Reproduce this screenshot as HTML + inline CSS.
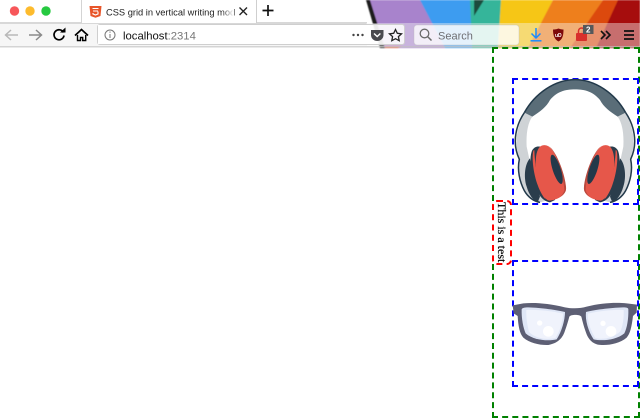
<!DOCTYPE html>
<html><head><meta charset="utf-8"><style>
html,body{margin:0;padding:0;background:#fff;width:640px;height:417px;overflow:hidden}
#s{position:absolute;left:0;top:0}
text{font-family:"Liberation Sans",sans-serif}
#g{position:absolute;left:492px;top:47px;width:144px;height:367px;border:2px dashed #008000}
.b{position:absolute;border:2px dashed #00f;box-sizing:border-box}
#r{position:absolute;left:492px;top:200px;width:20px;height:65px;border:2px dashed #f00;border-radius:5px;box-sizing:border-box;writing-mode:vertical-rl;font:12px/16px "Liberation Serif",serif;color:#000;white-space:nowrap;text-align:left;background:#fff;-webkit-text-stroke:.2px #000;overflow:visible}
</style></head><body>
<svg id="s" width="640" height="417" viewBox="0 0 640 417">
<defs>
<filter id="bl" x="-5%" y="-5%" width="110%" height="110%"><feGaussianBlur stdDeviation="0.6"/></filter>
<linearGradient id="fd" x1="0" x2="1" y1="0" y2="0"><stop offset="0" stop-color="#fff" stop-opacity="0"/><stop offset="1" stop-color="#fff"/></linearGradient>
</defs>
<!-- art -->
<g filter="url(#bl)">
<polygon points="367,0 422,0 446,48 384,48" fill="#a883cc"/>
<polygon points="366,0 370,0 385,48 380,48" fill="#1d1d1d"/>
<polygon points="420,0 473,0 472,48 445,48" fill="#3d9cf0"/>
<polygon points="470,0 503,0 500,48 472,48" fill="#35b59a"/>
<polygon points="474,0 484,0 474,16" fill="#1a4c3c"/>
<polygon points="501,0 553,0 530,48 498,48" fill="#f6c617"/>
<polygon points="553,0 603,0 572,48 528,48" fill="#ee7f1f"/>
<polygon points="603,0 620,0 598,48 570,48" fill="#dc4a0e"/>
<polygon points="618,0 640,0 640,48 596,48" fill="#a60e0c"/>
<polygon points="385,46 402,46 398,48 385,48" fill="#e0583a"/>
</g>
<!-- tab bar -->
<rect x="0" y="22" width="367" height="2" fill="#d8d8d8"/>
<rect x="82" y="0" width="175" height="23" fill="#fff"/>
<rect x="81" y="0" width="1" height="23" fill="#d4d4d4"/>
<rect x="256" y="0" width="1" height="23" fill="#cfcfcf"/>
<circle cx="14.500" cy="11" r="4.700" fill="#f7575a"/><circle cx="30" cy="11" r="4.700" fill="#fdbb2d"/><circle cx="46" cy="11" r="4.700" fill="#26c940"/>
<path d="M89.500,6h12l-1,10-5,1.800-5-1.800z" fill="#e8562a"/>
<path d="M92.500,8.500h6M93,11h5M98,11.500v2.500l-2.500,1-2.500-1v-1" stroke="#fff" stroke-width="1.100" fill="none"/>
<text x="106" y="15.500" font-size="9.300" fill="#1c1c1c">CSS grid in vertical writing mod</text>
<rect x="222" y="2" width="12" height="19" fill="url(#fd)"/>
<path d="M239.500,7.500l7.500,7.500M247,7.500l-7.500,7.500" stroke="#222" stroke-width="1.400"/>
<path d="M268,5v11M262.500,10.500h11" stroke="#111" stroke-width="1.700"/>
<!-- toolbar -->
<rect x="366" y="23" width="274" height="23" fill="#f5f5f5" opacity=".42"/>
<rect x="0" y="24" width="367" height="22" fill="#f6f6f6"/>
<rect x="0" y="46" width="640" height="1.500" fill="#c9c9c9" opacity=".8"/>
<rect x="257" y="22" width="110" height="1" fill="#d8d8d8"/>
<path d="M6,35h12M11,30l-5.500,5 5.500,5" stroke="#b8b8b8" stroke-width="1.500" fill="none"/>
<path d="M29,35h12M36,30l5.500,5-5.500,5" stroke="#8a8a8a" stroke-width="1.500" fill="none"/>
<path d="M63.500,32.500a5,5 0 1 0 .5,3" stroke="#000" stroke-width="1.700" fill="none"/><path d="M60,32.500h5.500v-5z" fill="#000"/>
<path d="M75,35.500l6.500-6 6.500,6" stroke="#000" stroke-width="1.700" fill="none"/><path d="M77.500,35v5.500h3v-3h2.200v3h3V35" stroke="#000" stroke-width="1.400" fill="none"/>
<rect x="97.500" y="24.500" width="307" height="20" rx="2.500" fill="#fff" fill-opacity=".85" stroke="#cfcfcf"/>
<rect x="98" y="25" width="269" height="19" fill="#fff"/>
<circle cx="110" cy="35" r="5" fill="none" stroke="#777" stroke-width="1"/><path d="M110,34v4M110,31.500v1.200" stroke="#777" stroke-width="1"/>
<text x="123" y="39.500" font-size="11.300" fill="#111">localhost<tspan fill="#777">:2314</tspan></text>
<circle cx="353.500" cy="35" r="1.200" fill="#444"/><circle cx="358" cy="35" r="1.200" fill="#444"/><circle cx="362.500" cy="35" r="1.200" fill="#444"/>
<path d="M371,30h12.500v5a6.250,6 0 0 1-12.500,0z" fill="#4a4a4f"/><path d="M374,33.500l3.200,3 3.200-3" stroke="#fff" stroke-width="1.400" fill="none"/>
<path d="M395.500,29.500l1.800,3.800 4.200,.5-3.100,2.800 .8,4.100-3.700-2-3.700,2 .8-4.100-3.100-2.800 4.200-.5z" fill="none" stroke="#222" stroke-width="1.300"/>
<rect x="414" y="25" width="105" height="20" rx="3" fill="#fff" fill-opacity=".78" stroke="#bbb" stroke-opacity=".4"/>
<circle cx="424.500" cy="33.500" r="4.300" fill="none" stroke="#6a6a6a" stroke-width="1.300"/><path d="M427.500,36.500l4,4" stroke="#6a6a6a" stroke-width="1.500"/>
<text x="438" y="39.500" font-size="11" fill="#6e6e72">Search</text>
<path d="M536,28v10M531.500,33.500l4.500,4.500 4.500-4.500" stroke="#1a8cff" stroke-width="1.500" fill="none"/><path d="M530.500,40.800h11" stroke="#1a8cff" stroke-width="1.500"/>
<path d="M553,29.500c3,0 5,-.8 5.500,-1 .5,.2 2.500,1 5,1 0,6 -1,10 -5,12 -4,-2 -5.500,-6 -5.500,-12z" fill="#7e0a0a"/>
<text x="558.300" y="37" font-size="5" font-weight="bold" fill="#fff" text-anchor="middle">uD</text>
<rect x="576" y="33" width="11" height="8" rx="1" fill="#d8302c"/><path d="M578.500,33v-2a3,3 0 0 1 6,0v2" stroke="#d8302c" stroke-width="1.500" fill="none"/>
<rect x="583" y="25" width="10.500" height="9" fill="#55585b"/><text x="588.200" y="32.500" font-size="8" font-weight="bold" fill="#fff" text-anchor="middle">2</text>
<path d="M601,31l4,4-4,4M606,31l4,4-4,4" stroke="#111" stroke-width="1.600" fill="none"/>
<path d="M624,31h10M624,35h10M624,39h10" stroke="#111" stroke-width="1.800"/>
</svg>
<div id="g"></div>
<div class="b" style="left:512px;top:78px;width:127px;height:127px"></div>
<div class="b" style="left:512px;top:260px;width:127px;height:127px"></div>
<svg style="position:absolute;left:0;top:0" width="640" height="417" viewBox="0 0 640 417">
<defs>
<g id="cup" transform="translate(90,210)">
<path d="M45,55C30,70 25,110 35,140C42,165 55,182 68,187L75,170C60,130 50,90 45,55Z" fill="#2a3d4c"/>
<path d="M52,30C42,50 45,100 60,140C70,165 85,185 105,187L120,180L75,20C65,18 58,22 52,30Z" fill="#2a3d4c"/>
<path d="M55,32C50,55 55,100 68,135C75,155 85,172 92,178C80,150 60,100 58,30Z" fill="#e6574a"/>
<path d="M75,20C85,12 100,14 110,28C130,55 150,110 153,145C153,165 130,178 105,182C92,182 82,165 72,135C62,100 55,40 75,20Z" fill="#e6574a"/>
<path d="M100,16C125,40 145,100 148,150C145,162 138,170 128,174C148,165 155,155 153,140C150,105 130,50 110,26Z" fill="#b84a3f"/>
<ellipse cx="125" cy="88" rx="12" ry="46" transform="rotate(-18 125 88)" fill="#23394a"/>
</g>
</defs>
<g transform="translate(485,70) scale(.33333)">
<!-- side grey -->
<path d="M118,128C98,165 84,218 104,268C98,300 104,335 118,362C128,380 145,395 165,397L185,392L140,300L125,230C123,190 128,160 142,140Z" fill="#cfd3d6"/>
<path d="M422,128C442,165 456,218 436,268C442,300 436,335 422,362C412,380 395,395 375,397L355,392L400,300L415,230C417,190 412,160 398,140Z" fill="#cfd3d6"/>
<!-- band -->
<path d="M118,128C150,70 210,30 270,30C330,30 390,70 422,128L398,140C375,125 355,110 345,90C325,65 300,58 270,58C240,58 215,65 195,90C185,110 165,125 142,140Z" fill="#5a6d78"/>
<path d="M118,128C96,160 78,215 103,268C96,300 104,335 118,362C128,380 145,394 165,397" fill="none" stroke="#22394a" stroke-width="4.500"/>
<path d="M422,128C444,160 462,215 437,268C444,300 436,335 422,362C412,380 395,394 375,397" fill="none" stroke="#22394a" stroke-width="4.500"/>
<path d="M118,128C150,70 210,29 270,29C330,29 390,70 422,128" fill="none" stroke="#22394a" stroke-width="4.500"/>
<use href="#cup"/>
<g transform="translate(540,0) scale(-1,1)"><use href="#cup"/></g>
</g>
<g transform="translate(485,290) scale(.33333)">
<path d="M83,46L115,40C150,37 190,40 240,52C260,56 285,56 305,50C350,38 395,37 425,40L456,44L455,68L444,78C440,110 436,130 425,143C405,160 375,166 350,165C325,165 310,150 302,125C296,108 292,92 289,80C284,73 258,73 253,80C250,92 245,108 239,125C232,145 218,160 190,165C165,166 135,160 115,143C104,130 100,110 98,78L86,70Z" fill="#5d5f74"/>
<path d="M110,58C111,54 118,52 130,52C170,53 215,60 240,66C240,90 230,125 215,148C190,154 145,151 122,130C115,115 109,85 110,58Z" fill="#dfe6f6"/>
<path d="M124,60C165,58 210,65 234,71C234,92 225,125 211,144C186,150 152,146 132,126C127,105 123,85 124,60Z" fill="#f0f3fc"/>
<path d="M303,66C325,60 375,53 414,52C426,52 430,54 430,58C431,85 426,115 418,130C395,150 350,154 326,148C310,125 300,90 303,66Z" fill="#dfe6f6"/>
<path d="M309,71C332,65 380,58 416,60C417,85 413,110 406,124C385,144 352,150 331,144C318,125 306,92 309,71Z" fill="#f0f3fc"/>
<circle cx="190" cy="124" r="16" fill="#fff"/><circle cx="164" cy="99" r="8" fill="#fff"/>
<circle cx="378" cy="124" r="16" fill="#fff"/><circle cx="354" cy="100" r="8" fill="#fff"/>
</g>
</svg>
<div id="r">This is a test</div>
</body></html>
